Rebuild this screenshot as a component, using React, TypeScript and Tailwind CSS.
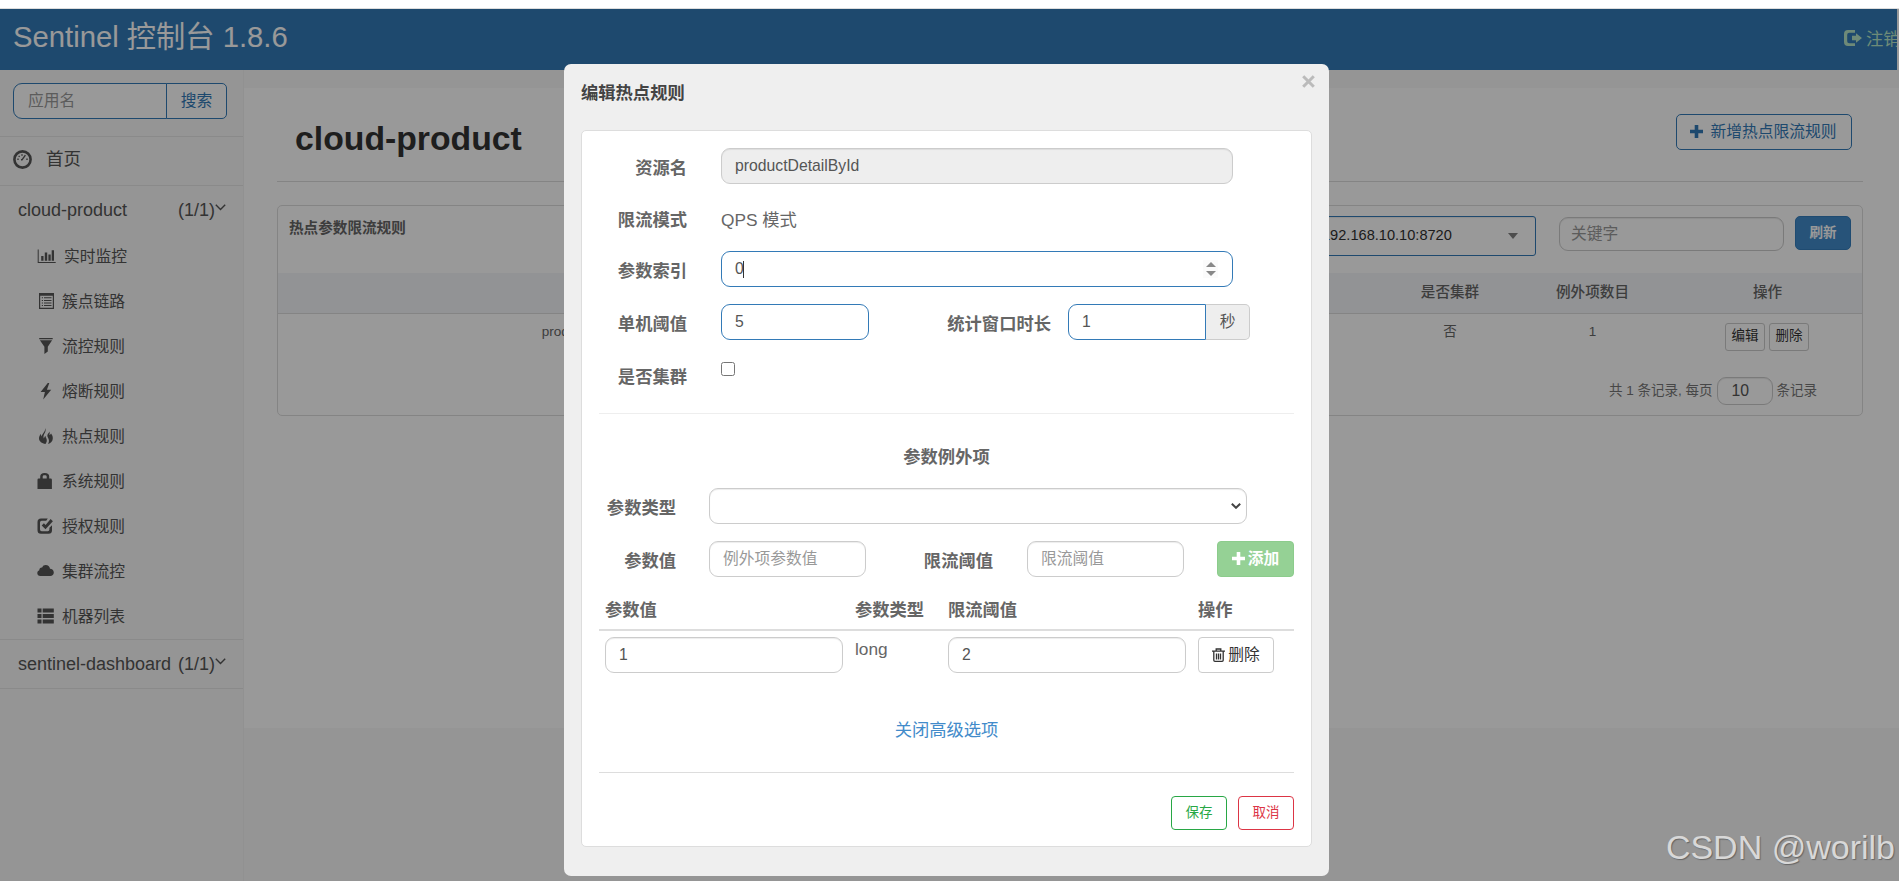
import type { ReactNode } from 'react';

const menus = [
  { name: '实时监控', icon: 'chart' },
  { name: '簇点链路', icon: 'list' },
  { name: '流控规则', icon: 'filter' },
  { name: '熔断规则', icon: 'flash' },
  { name: '热点规则', icon: 'fire' },
  { name: '系统规则', icon: 'lock' },
  { name: '授权规则', icon: 'check' },
  { name: '集群流控', icon: 'cloud' },
  { name: '机器列表', icon: 'machines' },
];

const icons: Record<string, ReactNode> = {
  chart: (
    <path d="M.7 1.500h1v12.500h17v1H.7zM4.200 8h2.300v4.800H4.200zM7.800 4.500h2.400v8.300H7.800zM11.400 6.500h2.300v6.300h-2.300zM14.700 2.200H17v10.600h-2.300z" />
  ),
  list: (
    <path
      fillRule="evenodd"
      d="M2 0h15v16H2zM3.200 2.800v12h12.600v-12zM4.800 4.300H6v1H4.800zM7 4.300h7.500v1H7zM4.800 6.900H6v1H4.800zM7 6.900h7.500v1H7zM4.800 9.500H6v1H4.800zM7 9.500h7.500v1H7zM4.800 12.100H6v1H4.800zM7 12.100h7.500v1H7z"
    />
  ),
  filter: <path d="M2.200 0h13.500v1.200H2.200zM2.900 2.200h12.200L10.800 8.800v4.700L7.400 16V8.800z" />,
  flash: <path d="M10.800 0 3.600 9h4.300L6.200 16.500 14.200 6.800H9.900L12.300 0z" />,
  fire: (
    <path d="M8.300 0c.9 2.400-.1 4.200-1.100 6-.8 1.500-1 3.100-.3 4.600.3-1.300.8-2.100 1.500-2.800.3 2.300 1.600 2.900 1.400 4.900-.1 1.300-.7 2.300-1.300 3.300C5 15.600 2 13.500 2 10.300 2 8.400 3 7 4 5.700c-.1 1.200 0 2.100.5 2.900C5 5.800 8.300 4 8.300 0zM12.600 3.500c.2 1.500.1 2.500-.4 3.500.8-.2 1.500-.7 1.900-1.400 1.100 1.500 1.800 3.100 1.700 4.800-.1 2.900-2.100 4.900-4.800 5.600 1-1.600 1.300-3.200.6-4.900-.5-1.500-1.500-2.400-1.200-4.100.2-1.300 1.700-1.900 2.200-3.500z" />
  ),
  lock: (
    <path
      fillRule="evenodd"
      d="M3.200 5.500V3.500C3.200 1.300 4.700 0 7.700 0s4.500 1.300 4.500 3.500v2h1.500q1.200 0 1.200 1.200V16H.5V6.700q0-1.200 1.200-1.200zM5.700 5.500h4V3.700C9.700 2.600 9 2.200 7.700 2.200s-2 .4-2 1.500z"
    />
  ),
  check: (
    <path d="M10.800.5 9.200 2.700H4.700Q3 2.700 3 4.400v7.200q0 1.700 1.700 1.700h6Q12.400 13.300 12.400 11.600V9.800L15 7.300v4.900q0 3.500-3.500 3.500H4q-3.500 0-3.500-3.500V4Q.5.500 4 .5zM13.600 1l2.300 2.200L8.500 11.200 4.700 7.400l2.200-2.200 1.700 1.700z" />
  ),
  cloud: (
    <path d="M3.400 13C1.500 13 .3 11.800.3 10.200c0-1.500.9-2.500 2-2.900 0-2 1.300-3 2.800-2.800C5.800 2.800 7 2 8.700 2c2.300 0 4 1.500 4.300 3.700 2.100.1 3.800 1.600 3.800 3.700S15.200 13 13.300 13z" />
  ),
  machines: (
    <path d="M.5.500h4v4h-4zM5.700.500h11.100v4H5.700zM.5 6h4v4h-4zM5.700 6h11.100v4H5.700zM.5 11.500h4v4h-4zM5.700 11.500h11.100v4H5.700z" />
  ),
};

function Chevron() {
  return (
    <svg width="11" height="7" viewBox="0 0 11 7" fill="none" stroke="currentColor" strokeWidth="1.4">
      <path d="M.8.8 5.500 5.500 10.200.8" />
    </svg>
  );
}

function Plus() {
  return (
    <svg width="13" height="13" viewBox="0 0 13 13" fill="currentColor">
      <path d="M4.700 0h3.600v4.700H13v3.600H8.300V13H4.700V8.300H0V4.700h4.700z" />
    </svg>
  );
}

function AppRow({ name }: { name: string }) {
  return (
    <div className="flex h-[48px] shrink-0 items-center pl-[18px] pr-[17px] text-[18px] text-[#555]">
      <span className="flex-1">{name}</span>
      <span>(1/1)</span>
      <span className="mb-[6px]">
        <Chevron />
      </span>
    </div>
  );
}

function Sidebar() {
  return (
    <aside className="flex w-[244px] shrink-0 flex-col border-r border-[#f2f2f2] text-[#555]">
      <div className="flex h-[67px] shrink-0 border-b border-[#e7e7e7] pl-[13px] pt-[13px]">
        <input
          className="h-[36px] w-[154px] rounded-l-[9px] border border-[#337ab7] bg-white pl-[14px] text-[15.75px] placeholder:text-[#999]"
          placeholder="应用名"
        />
        <button className="-ml-px h-[36px] w-[61px] rounded-r-[5px] border border-[#337ab7] bg-white text-[15.75px] text-[#337ab7]">
          搜索
        </button>
      </div>
      <div className="flex h-[49px] shrink-0 items-center border-b border-[#e7e7e7] pb-[3px] pl-[13px] text-[17.5px]">
        <svg width="19" height="19" viewBox="0 0 19 19" fill="none" stroke="currentColor">
          <circle cx="9.500" cy="9.500" r="8.100" strokeWidth="2.600" />
          <path
            d="M4.300 9.300h1.400M5.700 5.900l.9 1M9 4.300v1.400M13.300 9.300h1.400M8.800 10.200l3.600-5M8 9.800h1.600"
            strokeWidth="1.400"
          />
        </svg>
        <span className="ml-[14px]">首页</span>
      </div>
      <AppRow name="cloud-product" />
      <ul>
        {menus.map((menu) => (
          <li key={menu.name} className="flex h-[45px] items-center pl-[37px] text-[15.75px]">
            <svg className="mb-[2px] overflow-visible" width="17" height="16" viewBox="0 0 17 16" fill="currentColor">
              {icons[menu.icon]}
            </svg>
            <span className={menu.icon === 'chart' ? 'ml-[10px]' : 'ml-[8px]'}>{menu.name}</span>
          </li>
        ))}
      </ul>
      <div className="border-y border-[#e7e7e7]">
        <AppRow name="sentinel-dashboard" />
      </div>
    </aside>
  );
}

function Header() {
  return (
    <header className="flex h-[61px] shrink-0 items-center bg-[#337ab7] pl-[13px]">
      <h1 className="flex-1 pb-[6px] text-[29.25px] leading-[40px] text-white">Sentinel 控制台 1.8.6</h1>
      <a className="flex h-full w-[53px] items-center overflow-hidden whitespace-nowrap text-[17.3px] text-[#b8e6c8]">
        <svg className="mb-[3px] shrink-0" width="18" height="16" viewBox="0 0 18 16" fill="currentColor">
          <path d="M11 0v2.700H5.300Q3.200 2.700 3.200 4.800v6.400q0 2.100 2.100 2.100H11V16H4Q0 16 0 12V4Q0 0 4 0zM12 3.200 18 8l-6 4.800V10.200H8V5.800h4z" />
        </svg>
        <span className="ml-[4px]">注销</span>
      </a>
      <div className="h-full w-[2px] bg-white" />
    </header>
  );
}

function RulePanel() {
  return (
    <section className="mt-[23px] flex h-[211px] flex-col rounded-[5px] border border-[#ddd]">
      <div className="flex h-[67px] shrink-0 items-start pl-[11px] pr-[11px] pt-[10px]">
        <span className="mt-px flex-1 text-[14.6px] font-bold leading-[22px] text-[#666]">热点参数限流规则</span>
        <div className="flex h-[40px] w-[275px] items-center justify-between rounded-[3px] border border-[#337ab7] bg-white pl-[60px] pr-[17px] text-[14.6px] text-[#303030] shadow-[inset_0_1px_1px_rgba(0,0,0,0.075)]">
          <span>192.168.10.10:8720</span>
          <span className="border-x-[5px] border-t-[6px] border-x-transparent border-t-[#808080]" />
        </div>
        <input
          className="ml-[23px] mt-[1px] h-[34px] w-[225px] rounded-[9px] border border-[#ccc] bg-white pl-[11px] text-[15.75px] shadow-[inset_0_1px_1px_rgba(0,0,0,0.075)] placeholder:text-[#999]"
          placeholder="关键字"
        />
        <button className="ml-[11px] h-[34px] w-[56px] rounded-[5px] border border-[#357ebd] bg-[#428bca] text-[13.5px] font-bold text-white">
          刷新
        </button>
      </div>
      <table className="w-full table-fixed text-center text-[13.5px] text-[#666]">
        <colgroup>
          <col className="w-[634px]" />
          <col />
          <col className="w-[142px]" />
          <col className="w-[143px]" />
          <col className="w-[198px]" />
        </colgroup>
        <thead>
          <tr className="h-[40px] border-b border-[#ddd] bg-[#f3f5f8] text-[14.6px] text-[#666]">
            <th></th>
            <th></th>
            <th className="font-medium">是否集群</th>
            <th className="font-medium">例外项数目</th>
            <th className="pl-[9px] font-medium">操作</th>
          </tr>
        </thead>
        <tbody>
          <tr className="h-[46px] align-top">
            <td className="pt-[8px]">productDetailById</td>
            <td></td>
            <td className="pt-[8px]">否</td>
            <td className="pt-[8px]">1</td>
            <td className="pl-[8px] pt-[9px]">
              <div className="flex justify-center gap-[4px] text-[#333]">
                <button className="h-[28px] w-[40px] rounded-[3px] border border-[#ccc] bg-white">编辑</button>
                <button className="h-[28px] w-[40px] rounded-[3px] border border-[#ccc] bg-white">删除</button>
              </div>
            </td>
          </tr>
        </tbody>
      </table>
      <div className="mt-[18px] flex items-center justify-end pr-[45px] text-[13.5px] text-[#777]">
        <span>共 1 条记录, 每页</span>
        <span className="mx-[4px] flex h-[28px] w-[56px] items-center rounded-[9px] border border-[#ccc] bg-white pl-[14px] text-[15.75px] text-[#555] shadow-[inset_0_1px_1px_rgba(0,0,0,0.075)]">
          10
        </span>
        <span>条记录</span>
      </div>
    </section>
  );
}

function Label({ className, children }: { className: string; children: ReactNode }) {
  return (
    <label className={`h-[36px] shrink-0 text-right text-[17.3px] font-bold leading-[40px] text-[#666] ${className}`}>
      {children}
    </label>
  );
}

const field =
  'h-[36px] border bg-white pl-[13px] text-[15.75px] text-[#555] outline-none placeholder:text-[#999]';
const grayField = `${field} rounded-[9px] border-[#ccc] shadow-[inset_0_1px_1px_rgba(0,0,0,0.075)]`;

function EditDialog() {
  return (
    <div className="absolute left-[564px] top-[64px] flex h-[812px] w-[765px] flex-col rounded-[7px] bg-[#efefef] px-[17px]">
      <div className="flex h-[66px] shrink-0 justify-between">
        <h2 className="pt-[17px] text-[17.3px] font-bold leading-[24px] text-[#444]">编辑热点规则</h2>
        <svg className="-mr-[3px] mt-[11px]" width="13" height="13" viewBox="0 0 13 13" stroke="#bbb" strokeWidth="3">
          <path d="m1.200 1.200 10.600 10.600M11.800 1.200 1.200 11.800" />
        </svg>
      </div>
      <div className="flex h-[717px] w-[731px] flex-col rounded-[5px] border border-[#ddd] bg-white px-[17px] pt-[17px]">
        <div className="flex">
          <Label className="w-[88px]">资源名</Label>
          <input
            className="ml-[34px] h-[36px] w-[512px] rounded-[9px] border border-[#ccc] bg-[#eee] pl-[13px] text-[15.75px] text-[#555] shadow-[inset_0_1px_1px_rgba(0,0,0,0.075)]"
            defaultValue="productDetailById"
            readOnly
          />
        </div>
        <div className="mt-[16px] flex">
          <Label className="w-[88px]">限流模式</Label>
          <span className="ml-[34px] text-[17.3px] leading-[41px] text-[#666]">QPS 模式</span>
        </div>
        <div className="mt-[10px] flex">
          <Label className="w-[88px]">参数索引</Label>
          <div className={`${field} ml-[34px] flex w-[512px] items-center rounded-[9px] border-[#337ab7] pr-[14px]`}>
            <span>0</span>
            <span className="-ml-px h-[17px] w-px bg-[#333]" />
            <span className="flex-1" />
            <span className="flex h-[18px] w-[15px] flex-col items-center justify-center gap-[4px] bg-[#fbfbfb]">
              <span className="border-x-[5px] border-b-[5px] border-x-transparent border-b-[#888]" />
              <span className="border-x-[5px] border-t-[5px] border-x-transparent border-t-[#888]" />
            </span>
          </div>
        </div>
        <div className="mt-[17px] flex">
          <Label className="w-[88px]">单机阈值</Label>
          <input className={`${field} ml-[34px] w-[148px] rounded-[9px] border-[#337ab7]`} defaultValue="5" />
          <Label className="w-[182px]">统计窗口时长</Label>
          <input className={`${field} ml-[17px] w-[138px] rounded-l-[9px] border-[#337ab7]`} defaultValue="1" />
          <span className="h-[36px] w-[44px] rounded-r-[5px] border border-l-0 border-[#ccc] bg-[#eee] text-center text-[15.75px] leading-[34px] text-[#555]">
            秒
          </span>
        </div>
        <div className="mt-[17px] flex">
          <Label className="w-[88px]">是否集群</Label>
          <input type="checkbox" className="ml-[34px] mt-[5px] h-[14px] w-[14px]" />
        </div>
        <hr className="mt-[20px] border-[#eee]" />

        <h3 className="mt-[30px] text-center text-[17.3px] font-bold leading-[26px] text-[#666]">参数例外项</h3>
        <div className="mt-[18px] flex">
          <Label className="w-[77px]">参数类型</Label>
          <div className={`${grayField} ml-[33px] flex w-[538px] items-center justify-end pr-[5px]`}>
            <svg width="10" height="6" viewBox="0 0 10 6" fill="none" stroke="#444" strokeWidth="2">
              <path d="m.8.8 4.200 4 4.200-4" />
            </svg>
          </div>
        </div>
        <div className="mt-[17px] flex">
          <Label className="w-[77px]">参数值</Label>
          <input className={`${grayField} ml-[33px] w-[157px]`} placeholder="例外项参数值" />
          <Label className="w-[127px]">限流阈值</Label>
          <input className={`${grayField} ml-[34px] w-[157px]`} placeholder="限流阈值" />
          <button className="ml-[33px] flex h-[36px] w-[77px] items-center justify-center gap-[3px] rounded-[4px] border border-[#8ccc8c] bg-[#95d195] pb-[1px] text-[15.75px] font-bold text-white">
            <Plus />
            添加
          </button>
        </div>

        <table className="mt-[14px] table-fixed text-left text-[17.3px] text-[#666]">
          <thead>
            <tr className="h-[39px] border-b-2 border-[#ddd] leading-[36px]">
              <th className="w-[250px] pl-[6px]">参数值</th>
              <th className="w-[93px] pl-[6px]">参数类型</th>
              <th className="w-[250px] pl-[6px]">限流阈值</th>
              <th className="pl-[6px]">操作</th>
            </tr>
          </thead>
          <tbody>
            <tr className="align-top">
              <td className="pl-[6px] pt-[6px]">
                <input className={`${grayField} w-[238px]`} defaultValue="1" />
              </td>
              <td className="pl-[6px] pt-[6px] leading-[24px]">long</td>
              <td className="pl-[6px] pt-[6px]">
                <input className={`${grayField} w-[238px]`} defaultValue="2" />
              </td>
              <td className="pl-[6px] pt-[6px]">
                <button className="flex h-[36px] w-[76px] items-center justify-center gap-[3px] rounded-[4px] border border-[#ccc] bg-white text-[15.75px] text-[#333]">
                  <svg width="13" height="14" viewBox="0 0 13 14" fill="none" stroke="currentColor" strokeWidth="1.3">
                    <path d="M0 3.200h13M4.200 3V1h4.600v2M1.800 3.500v8.700q0 1.100 1.100 1.100h7.200q1.100 0 1.100-1.100V3.500M4.500 5.500v6M6.500 5.500v6M8.500 5.500v6" />
                  </svg>
                  删除
                </button>
              </td>
            </tr>
          </tbody>
        </table>

        <a className="mt-[43px] text-center text-[17.3px] leading-[28px] text-[#428bca]">关闭高级选项</a>
        <hr className="mt-[28px] border-[#ddd]" />
        <div className="mt-[23px] flex justify-end gap-[11px] text-[13.5px]">
          <button className="h-[34px] w-[56px] rounded-[4px] border border-[#28a745] text-[#28a745]">保存</button>
          <button className="h-[34px] w-[56px] rounded-[4px] border border-[#dc3545] text-[#dc3545]">取消</button>
        </div>
      </div>
    </div>
  );
}

export default function App() {
  return (
    <div className="relative flex h-[881px] w-[1899px] flex-col overflow-hidden bg-[#f8f8f8] font-['Liberation_Sans','Noto_Sans_CJK_SC',sans-serif]">
      <div className="h-[9px] shrink-0 border-b border-[#ddd] bg-white" />
      <Header />
      <div className="flex flex-1">
        <Sidebar />
        <main className="mt-[18px] h-[640px] flex-1 bg-white pl-[33px] pr-[36px]">
          <div className="flex h-[94px] items-start border-b border-[#ddd] pl-[18px] pr-[11px] pt-[26px]">
            <h1 className="-mt-[2px] flex-1 text-[33.75px] font-bold leading-[52px] text-[#333]">cloud-product</h1>
            <button className="flex h-[36px] w-[176px] items-center justify-center gap-[8px] rounded-[5px] border border-[#337ab7] bg-white pr-[2px] text-[15.75px] text-[#337ab7]">
              <span className="mb-[2px]">
                <Plus />
              </span>
              新增热点限流规则
            </button>
          </div>
          <RulePanel />
        </main>
      </div>

      {/* backdrop */}
      <div className="absolute inset-x-0 bottom-0 top-[9px] bg-black/40" />
      <EditDialog />
      <div className="absolute bottom-[14px] right-[4px] whitespace-nowrap text-[34px] leading-[40px] text-[#d8d8d8] [text-shadow:1px_1px_1px_#666]">
        CSDN @worilb
      </div>
    </div>
  );
}
